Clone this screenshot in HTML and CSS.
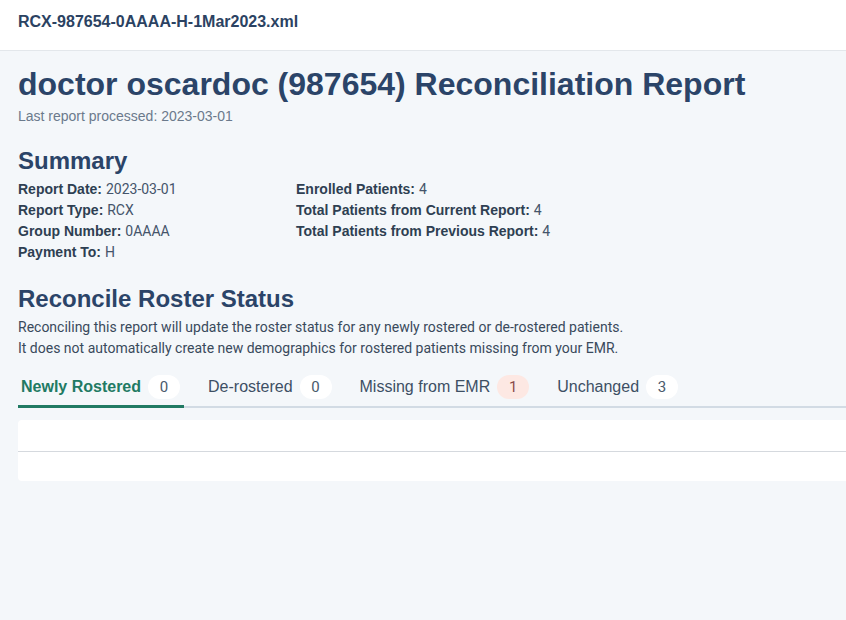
FILE: index.html
```html
<!DOCTYPE html>
<html>
<head>
<meta charset="utf-8">
<link rel="stylesheet" href="styles.css">
</head>
<body>
<header class="topbar">
  <div class="filename">RCX-987654-0AAAA-H-1Mar2023.xml</div>
</header>
<main class="content">
  <h1 class="title">doctor oscardoc (987654) Reconciliation Report</h1>
  <div class="subtitle">Last report processed: 2023-03-01</div>

  <h2 class="section-title summary-title">Summary</h2>
  <div class="summary">
    <div class="col col-left">
      <div class="row"><span class="label">Report Date:</span> <span class="value">2023-03-01</span></div>
      <div class="row"><span class="label">Report Type:</span> <span class="value">RCX</span></div>
      <div class="row"><span class="label">Group Number:</span> <span class="value">0AAAA</span></div>
      <div class="row"><span class="label">Payment To:</span> <span class="value">H</span></div>
    </div>
    <div class="col">
      <div class="row"><span class="label">Enrolled Patients:</span> <span class="value">4</span></div>
      <div class="row"><span class="label">Total Patients from Current Report:</span> <span class="value">4</span></div>
      <div class="row"><span class="label">Total Patients from Previous Report:</span> <span class="value">4</span></div>
    </div>
  </div>

  <h2 class="section-title reconcile-title">Reconcile Roster Status</h2>
  <p class="desc">Reconciling this report will update the roster status for any newly rostered or de-rostered patients.<br>It does not automatically create new demographics for rostered patients missing from your EMR.</p>

  <nav class="tabs">
    <div class="tab active"><span class="tab-label">Newly Rostered</span><span class="badge">0</span></div>
    <div class="tab"><span class="tab-label">De-rostered</span><span class="badge">0</span></div>
    <div class="tab"><span class="tab-label">Missing from EMR</span><span class="badge badge-alert">1</span></div>
    <div class="tab"><span class="tab-label">Unchanged</span><span class="badge">3</span></div>
  </nav>

  <div class="card">
    <div class="card-head"></div>
    <div class="card-body"></div>
  </div>
</main>
</body>
</html>
```

FILE: styles.css
```css
* { box-sizing: border-box; }
html, body {
  margin: 0;
  padding: 0;
  background: #f4f7fa;
  font-family: "Liberation Sans", Arial, sans-serif;
  color: #2b4468;
  overflow: hidden;
}
.topbar {
  height: 51px;
  background: #ffffff;
  border-bottom: 1px solid #e3e7eb;
  padding: 12px 18px 0;
}
.filename {
  font-size: 16px;
  font-weight: bold;
  line-height: 19px;
  color: #2b4262;
}
.content {
  padding: 0 0 0 18px;
}
.title {
  margin: 13px 0 0;
  font-size: 32px;
  line-height: 40px;
  font-weight: bold;
  color: #2b4468;
}
.subtitle {
  font-size: 14px;
  line-height: 18px;
  color: #6b7a8c;
  margin-top: 3px;
}
.section-title {
  font-size: 24px;
  font-weight: bold;
  line-height: 28px;
  margin: 0;
  color: #2b4468;
}
.summary-title { margin-top: 22px; }
.summary {
  display: flex;
  font-size: 14px;
  line-height: 21px;
  color: #3a4a5c;
  margin-top: 4px;
}
.col-left { width: 278px; }
.label {
  font-weight: bold;
  color: #2e3f52;
}
.value {
  font-family: Roboto, "Liberation Sans", sans-serif;
  color: #44546a;
}
.reconcile-title { margin-top: 22px; }
.desc {
  margin: 4px 0 0;
  font-family: Roboto, "Liberation Sans", sans-serif;
  font-size: 14px;
  line-height: 21px;
  color: #3a4a5c;
}
.tabs {
  display: flex;
  gap: 21px;
  margin-top: 10px;
  border-bottom: 2px solid #d2dbe4;
  height: 39px;
}
.tab {
  display: flex;
  align-items: center;
  gap: 7px;
  padding: 0 4px 0 3px;
  height: 39px;
  font-size: 16px;
  color: #3d4f64;
  margin-bottom: -2px;
  border-bottom: 3px solid transparent;
}
.tab.active {
  border-bottom-color: #217a63;
  color: #217a63;
  font-weight: bold;
}
.tab-label { line-height: 20px; }
.badge {
  display: inline-flex;
  align-items: center;
  justify-content: center;
  min-width: 32px;
  height: 24px;
  padding: 0 8px;
  border-radius: 12px;
  background: #ffffff;
  font-family: Roboto, "Liberation Sans", sans-serif;
  font-size: 15px;
  font-weight: normal;
  color: #4a5a6c;
}
.badge-alert {
  background: #fde8e3;
  color: #8a4b4b;
}
.card {
  margin-top: 12px;
  background: #ffffff;
  border-radius: 4px 0 0 4px;
}
.card-head {
  height: 32px;
  border-bottom: 1px solid #d5d9de;
}
.card-body {
  height: 29px;
}
```
